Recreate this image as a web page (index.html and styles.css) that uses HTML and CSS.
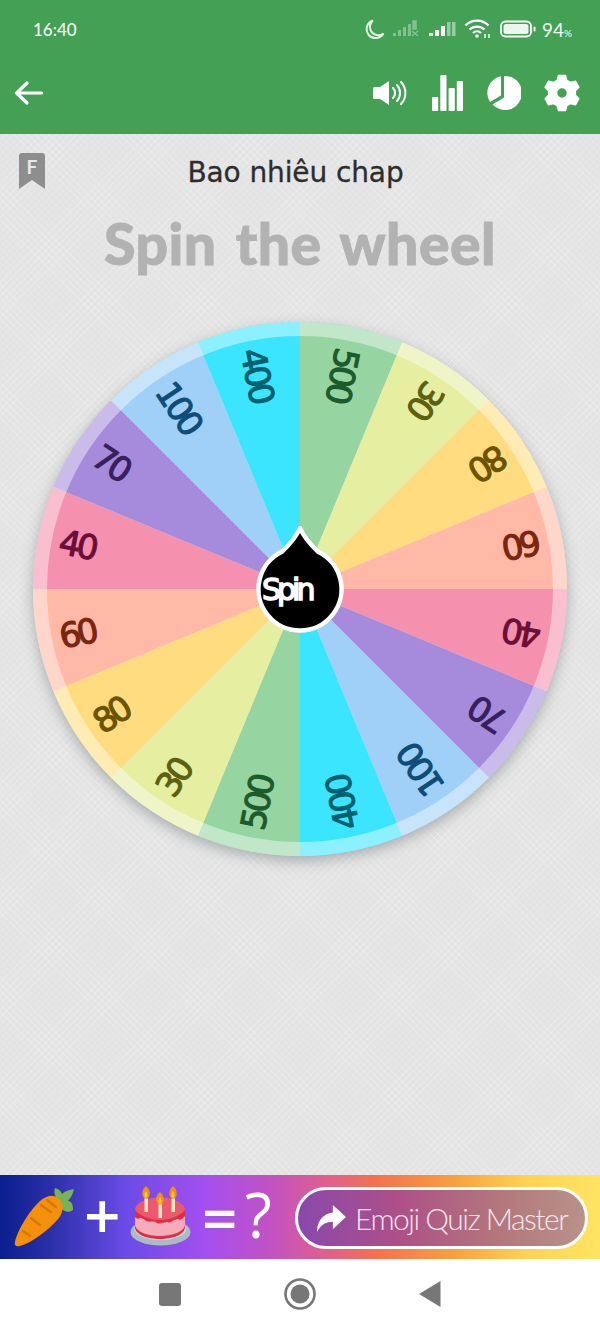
FILE: index.html
```html
<!DOCTYPE html>
<html lang="vi">
<head>
<meta charset="utf-8">
<title>Spin the wheel</title>
<link rel="stylesheet" href="styles.css">
</head>
<body>
<div class="app">
  <header class="appbar">
    <div class="status">
      <span class="time">16:40</span>
      <div class="status-icons">
        <svg class="ic-moon" width="20" height="22" viewBox="0 0 20 22"><path d="M8 2.500A9 9 0 1 0 18.500 15.500 8 8 0 0 1 8 2.500Z" fill="none" stroke="#fff" stroke-opacity=".85" stroke-width="2"/></svg>
        <svg width="28" height="18" viewBox="0 0 28 18" fill="#fff" opacity=".35"><rect x="0" y="13" width="3" height="3"/><rect x="5" y="10" width="3" height="6"/><rect x="10" y="7" width="3" height="9"/><rect x="15" y="4" width="3" height="12"/><path d="M20 1h3v8h-3zM19 11l6 5M25 11l-6 5" stroke="#fff" stroke-width="1.500"/></svg>
        <svg width="27" height="18" viewBox="0 0 27 18" fill="#fff"><rect x="0" y="13" width="4" height="3"/><rect x="6" y="10" width="4" height="6"/><rect x="12" y="6" width="4" height="10"/><rect x="18" y="2" width="3.500" height="14" opacity=".45"/><rect x="23" y="2" width="3.500" height="14" opacity=".45"/></svg>
        <svg width="28" height="20" viewBox="0 0 28 20" fill="none" stroke="#fff" stroke-width="2.200"><path d="M1.500 6.500A16 16 0 0 1 24.500 6.500"/><path d="M5.500 10.500A11 11 0 0 1 20.500 10.500"/><path d="M9 14a6 6 0 0 1 8 0"/><circle cx="13" cy="17" r="1.800" fill="#fff" stroke="none"/><path d="M21 15v4M25 15v4" stroke-width="1.400"/></svg>
        <svg width="36" height="18" viewBox="0 0 36 18"><rect x="1" y="1.500" width="30" height="15" rx="4.500" fill="none" stroke="#fff" stroke-width="1.800"/><rect x="3.500" y="4" width="25" height="10" rx="2.500" fill="#fff" fill-opacity=".9"/><rect x="33.500" y="6.500" width="2" height="5" rx="1" fill="#fff"/></svg>
        <span class="battery">94<small>%</small></span>
      </div>
    </div>
    <div class="toolbar">
      <svg class="back" width="30" height="26" viewBox="0 0 30 26" fill="none" stroke="#fff" stroke-width="3.200" stroke-linecap="round" stroke-linejoin="round"><path d="M27.500 13H3M13 3 2.500 13 13 23"/></svg>
      <div class="actions">
        <svg class="a-sound" width="36" height="28" viewBox="0 0 36 28" fill="#fff"><path d="M1 9.500Q1 8 2.500 8H8L17 2V26L8 20H2.500Q1 20 1 18.500Z"/><path d="M21 9a7 7 0 0 1 0 10M25 6a12 12 0 0 1 0 16M29 3a16 16 0 0 1 0 22" fill="none" stroke="#fff" stroke-width="2" stroke-linecap="round"/></svg>
        <svg class="a-bars" width="32" height="36" viewBox="0 0 32 36" fill="#fff"><rect x="0" y="22" width="6.200" height="14" rx="1"/><rect x="8.300" y="0" width="6.200" height="36" rx="1"/><rect x="16.600" y="13" width="6.200" height="23" rx="1"/><rect x="24.800" y="6" width="6.200" height="30" rx="1"/></svg>
        <svg class="a-pie" width="36" height="36" viewBox="0 0 36 36" fill="#fff"><path d="M16 1.200A17 17 0 0 0 5 27L16 20.500Z"/><path d="M19 1A17 17 0 1 1 7.500 29.500L19 22.500Z"/></svg>
        <svg class="a-gear" width="36" height="38" viewBox="0 0 36 38"><path fill="#fff" stroke="#fff" stroke-width="1.500" stroke-linejoin="round" fill-rule="evenodd" d="M14.500 1.500h7l1.300 4.900 3.700 2.100 4.900-1.300 3.500 6.100-3.600 3.600v4.200l3.600 3.600-3.500 6.100-4.900-1.300-3.700 2.100-1.300 4.900h-7l-1.300-4.900-3.700-2.100-4.900 1.300-3.500-6.100 3.600-3.600v-4.200L1.100 13.300l3.500-6.100 4.900 1.300 3.700-2.100ZM18 13.500a5.500 5.500 0 1 0 0 11 5.500 5.500 0 0 0 0-11Z"/></svg>
      </div>
    </div>
  </header>

  <main class="main">
    <div class="subject">
      <svg class="bookmark" width="26" height="36" viewBox="0 0 26 36"><path d="M3 0H23Q26 0 26 3V36L13 27 0 36V3Q0 0 3 0Z" fill="#8e8e8e"/><text x="13" y="21" class="bookmark-f">F</text></svg>
      <h2 class="subject-name">Bao nhiêu chap</h2>
    </div>
    <h1 class="title">Spin the wheel</h1>

    <svg class="wheel" width="534" height="534" viewBox="-267 -267 534 534">
      <path class="s-500" transform="rotate(0)" d="M0 0V-267A267 267 0 0 1 102.180 -246.680Z"/>
      <path class="s-30" transform="rotate(22.5)" d="M0 0V-267A267 267 0 0 1 102.180 -246.680Z"/>
      <path class="s-80" transform="rotate(45)" d="M0 0V-267A267 267 0 0 1 102.180 -246.680Z"/>
      <path class="s-60" transform="rotate(67.5)" d="M0 0V-267A267 267 0 0 1 102.180 -246.680Z"/>
      <path class="s-40" transform="rotate(90)" d="M0 0V-267A267 267 0 0 1 102.180 -246.680Z"/>
      <path class="s-70" transform="rotate(112.5)" d="M0 0V-267A267 267 0 0 1 102.180 -246.680Z"/>
      <path class="s-100" transform="rotate(135)" d="M0 0V-267A267 267 0 0 1 102.180 -246.680Z"/>
      <path class="s-400" transform="rotate(157.5)" d="M0 0V-267A267 267 0 0 1 102.180 -246.680Z"/>
      <path class="s-500" transform="rotate(180)" d="M0 0V-267A267 267 0 0 1 102.180 -246.680Z"/>
      <path class="s-30" transform="rotate(202.5)" d="M0 0V-267A267 267 0 0 1 102.180 -246.680Z"/>
      <path class="s-80" transform="rotate(225)" d="M0 0V-267A267 267 0 0 1 102.180 -246.680Z"/>
      <path class="s-60" transform="rotate(247.5)" d="M0 0V-267A267 267 0 0 1 102.180 -246.680Z"/>
      <path class="s-40" transform="rotate(270)" d="M0 0V-267A267 267 0 0 1 102.180 -246.680Z"/>
      <path class="s-70" transform="rotate(292.5)" d="M0 0V-267A267 267 0 0 1 102.180 -246.680Z"/>
      <path class="s-100" transform="rotate(315)" d="M0 0V-267A267 267 0 0 1 102.180 -246.680Z"/>
      <path class="s-400" transform="rotate(337.5)" d="M0 0V-267A267 267 0 0 1 102.180 -246.680Z"/>
      <circle class="rim" r="260" />
      <text class="n t-500" transform="rotate(11.25) translate(0 -245) rotate(90)">500</text>
      <text class="n t-30" transform="rotate(33.75) translate(0 -245) rotate(90)">30</text>
      <text class="n t-80" transform="rotate(56.25) translate(0 -245) rotate(90)">80</text>
      <text class="n t-60" transform="rotate(78.75) translate(0 -245) rotate(90)">60</text>
      <text class="n t-40" transform="rotate(101.25) translate(0 -245) rotate(90)">40</text>
      <text class="n t-70" transform="rotate(123.75) translate(0 -245) rotate(90)">70</text>
      <text class="n t-100" transform="rotate(146.25) translate(0 -245) rotate(90)">100</text>
      <text class="n t-400" transform="rotate(168.75) translate(0 -245) rotate(90)">400</text>
      <text class="n t-500" transform="rotate(191.25) translate(0 -245) rotate(90)">500</text>
      <text class="n t-30" transform="rotate(213.75) translate(0 -245) rotate(90)">30</text>
      <text class="n t-80" transform="rotate(236.25) translate(0 -245) rotate(90)">80</text>
      <text class="n t-60" transform="rotate(258.75) translate(0 -245) rotate(90)">60</text>
      <text class="n t-40" transform="rotate(281.25) translate(0 -245) rotate(90)">40</text>
      <text class="n t-70" transform="rotate(303.75) translate(0 -245) rotate(90)">70</text>
      <text class="n t-100" transform="rotate(326.25) translate(0 -245) rotate(90)">100</text>
      <text class="n t-400" transform="rotate(348.75) translate(0 -245) rotate(90)">400</text>
      <path class="knob" d="M0 -61C4 -51 11 -44 18 -37.400A41.500 41.500 0 1 1 -18 -37.400C-11 -44 -4 -51 0 -61Z"/>
      <text class="spin" x="-38" y="11">Spin</text>
    </svg>
  </main>

  <aside class="ad">
    <svg class="carrot" width="60" height="59" viewBox="0 0 60 59">
      <path d="M42 9C40 6 40 3 41 0 45 1 47 3 48 6 51 3 55 2 60 1 59 6 57 9 54 13 58 13 59 17 59 22 55 25 51 24 48 21Z" fill="#77b255"/>
      <path d="M44 10C39 6 32 8 26 13 14 24 3 44 1 54 0 58 3 59 6 58 17 55 34 43 45 30 50 23 50 15 44 10Z" fill="#f4900c"/>
      <path d="M27 17 37 24M33 12 42 19M17 30 26 37M9 43 16 48" stroke="#d67a06" stroke-width="2.500" stroke-linecap="round" fill="none"/>
    </svg>
    <span class="glyph plus">+</span>
    <svg class="cake" width="62" height="60" viewBox="0 0 62 60">
      <ellipse cx="30.500" cy="46" rx="30" ry="13.500" fill="#a9bcc6"/>
      <ellipse cx="30.500" cy="43" rx="26" ry="11" fill="#ccd6dd"/>
      <path d="M5 25V40C5 48 18 52 30 52S55 48 55 40V25Z" fill="#f4abba"/>
      <path d="M5 38C5 46 18 50 30 50S55 46 55 38V41C55 49 42 53 30 53S5 49 5 41Z" fill="#dd2e44"/>
      <ellipse cx="30" cy="24" rx="25" ry="12.500" fill="#ea596e"/>
      <path d="M5 24V31C8 35 10 30 14 33 18 38 21 34 25 35 28 40 33 36 37 36 41 38 44 32 48 33 51 35 53 32 55 30V24C50 30 40 34 30 34S10 30 5 24Z" fill="#dd2e44"/>
      <path d="M14.500 10h3.500V26h-3.500ZM28.500 17h3.500V32h-3.500ZM41.500 10h3.500V26h-3.500Z" fill="#ffe8b6"/>
      <path d="M16 0C21 4 21 12 16 13 11 12 11 4 16 0ZM30 6C35 10 35 18 30 19 25 18 25 10 30 6ZM43 0C48 4 48 12 43 13 38 12 38 4 43 0Z" fill="#f4900c"/>
      <path d="M16 5C18 8 18 11 16 12 14 11 14 8 16 5ZM30 11C32 14 32 17 30 18 28 17 28 14 30 11ZM43 5C45 8 45 11 43 12 41 11 41 8 43 5Z" fill="#ffcc4d"/>
    </svg>
    <span class="glyph equals">=</span>
    <span class="glyph question">?</span>
    <a class="quiz">
      <svg width="30" height="28" viewBox="0 0 32 30"><path d="M18 1 32 14 18 27V19C11 19 5 22 1 30 1 19 7 10 18 9Z" fill="#fff"/></svg>
      <span>Emoji Quiz Master</span>
    </a>
  </aside>

  <nav class="navbar">
    <span class="nav-square"></span>
    <svg width="32" height="32" viewBox="0 0 32 32"><circle cx="16" cy="16" r="14.500" fill="none" stroke="#777" stroke-width="2.600"/><circle cx="16" cy="16" r="9.500" fill="#777"/></svg>
    <svg width="22" height="26" viewBox="0 0 22 26"><path d="M21.500 0V26L0 13Z" fill="#777"/></svg>
  </nav>
</div>
</body>
</html>
```
FILE: styles.css
```css
* { box-sizing: border-box; }
html, body { margin: 0; padding: 0; }
body { width: 600px; height: 1333px; overflow: hidden; font-family: "Lato", "Noto Sans", sans-serif; }
.app { display: flex; flex-direction: column; height: 1333px; }

.appbar { flex: 0 0 134px; background: #43a055; color: #fff; display: flex; flex-direction: column; }
.status { height: 58px; padding: 0 28px 0 33px; display: flex; align-items: center; justify-content: space-between; }
.time { font-size: 17px; font-weight: 500; color: #f1f8f1; }
.status-icons { display: flex; align-items: center; gap: 8px; }
.status-icons .battery { margin-left: -2px; }
.battery { font-size: 19px; color: #f1f8f1; }
.battery small { font-size: 10px; }

.toolbar { flex: 1; padding: 0 20px 6px 14px; display: flex; align-items: center; justify-content: space-between; }
.actions { display: flex; align-items: center; }
.a-sound { margin-right: 24px; }
.a-bars { margin-right: 21px; }
.a-pie { margin-right: 23px; }

.main {
  flex: 0 0 1041px;
  display: flex;
  flex-direction: column;
  align-items: center;
  background-color: #e7e7e7;
  background-image:
    repeating-linear-gradient(45deg, rgba(255,255,255,.12) 0 1px, rgba(0,0,0,.008) 1px 5px),
    repeating-linear-gradient(-45deg, rgba(255,255,255,.12) 0 1px, rgba(0,0,0,.008) 1px 5px);
}
.subject { width: 100%; height: 68px; padding: 19px 28px 0 19px; display: grid; grid-template-columns: 1fr auto 1fr; align-items: start; }
.bookmark-f { font-size: 19px; font-weight: 700; fill: #e8e8e8; text-anchor: middle; }
.subject-name { margin: 0; grid-column: 2; font-family: "DejaVu Sans", sans-serif; font-size: 28px; line-height: 40px; font-weight: 400; letter-spacing: -.1px; color: #2d2d2d; -webkit-text-stroke: .3px #2d2d2d; }
.title { margin: 0; height: 120px; font-size: 57px; line-height: 82px; font-weight: 900; color: #b2b2b2; letter-spacing: .5px; word-spacing: 5px; -webkit-text-stroke: 1px #b2b2b2; }
.wheel { display: block; flex: none; border-radius: 50%; overflow: visible; box-shadow: 0 5px 14px rgba(70,80,90,.38); }

.s-500 { fill: #96d4a2; }
.s-30 { fill: #e6eea2; }
.s-80 { fill: #ffdc7f; }
.s-60 { fill: #ffb9a6; }
.s-40 { fill: #f590ae; }
.s-70 { fill: #a68bdc; }
.s-100 { fill: #a0d0f8; }
.s-400 { fill: #3ce5fe; }
.rim { fill: none; stroke: rgba(255,255,255,.42); stroke-width: 14; }

.n { font-family: "DejaVu Sans", sans-serif; font-size: 34px; font-weight: 400; letter-spacing: -4px; dominant-baseline: central; stroke-width: 1.100; stroke-linejoin: round; }
.t-500 { fill: #1d5a2c; stroke: #1d5a2c; }
.t-30 { fill: #5c6010; stroke: #5c6010; }
.t-80 { fill: #6b5400; stroke: #6b5400; }
.t-60 { fill: #7a2510; stroke: #7a2510; }
.t-40 { fill: #6b0f38; stroke: #6b0f38; }
.t-70 { fill: #38205f; stroke: #38205f; }
.t-100 { fill: #0f4c78; stroke: #0f4c78; }
.t-400 { fill: #03606e; stroke: #03606e; }

.knob { fill: #000; stroke: #fff; stroke-width: 4.500; stroke-linejoin: round; }
.spin { font-family: "DejaVu Sans", sans-serif; font-size: 30px; font-weight: 400; fill: #fff; stroke: #fff; stroke-width: 1.500; letter-spacing: -4px; }

.ad {
  flex: 0 0 84px;
  padding: 0 12px 0 14px;
  display: flex;
  align-items: center;
  background: linear-gradient(90deg, #0a1f8e 0, #2a2fa8 50px, #6a4be6 125px, #a44ff0 205px, #c252c4 270px, #e2608a 330px, #f5704f 375px, #f8a040 455px, #ffd252 525px, #ffe463 600px);
  color: #fff;
}
.carrot { margin-right: 10px; flex: none; }
.glyph { font-family: "Open Sans", sans-serif; color: #fff; }
.plus { font-size: 64px; font-weight: 600; line-height: 60px; width: 32px; text-align: center; margin-right: 14px; margin-top: -4px; }
.cake { margin-right: 10px; margin-top: -2px; flex: none; }
.equals { font-size: 62px; font-weight: 600; line-height: 60px; width: 33px; text-align: center; margin-right: 10px; }
.question { font-size: 62px; line-height: 60px; width: 26px; text-align: center; margin-right: 24px; margin-top: -6px; }
.quiz {
  flex: 1;
  height: 62px;
  margin-top: 2px;
  padding-left: 18px;
  display: flex;
  align-items: center;
  gap: 9px;
  border: 3px solid #fff;
  border-radius: 31px;
  background: linear-gradient(90deg, #8a48ac, #ad5088 35%, #b3777c 70%, #b8928a);
  font-size: 30px;
  font-weight: 300;
  letter-spacing: -1.500px;
  color: #f6e6f0;
}

.navbar { flex: 0 0 74px; background: #fff; display: flex; align-items: center; justify-content: center; padding: 0 0 4px; gap: 103px; }
.nav-square { width: 22px; height: 23px; border-radius: 3px; background: #777; }
```
